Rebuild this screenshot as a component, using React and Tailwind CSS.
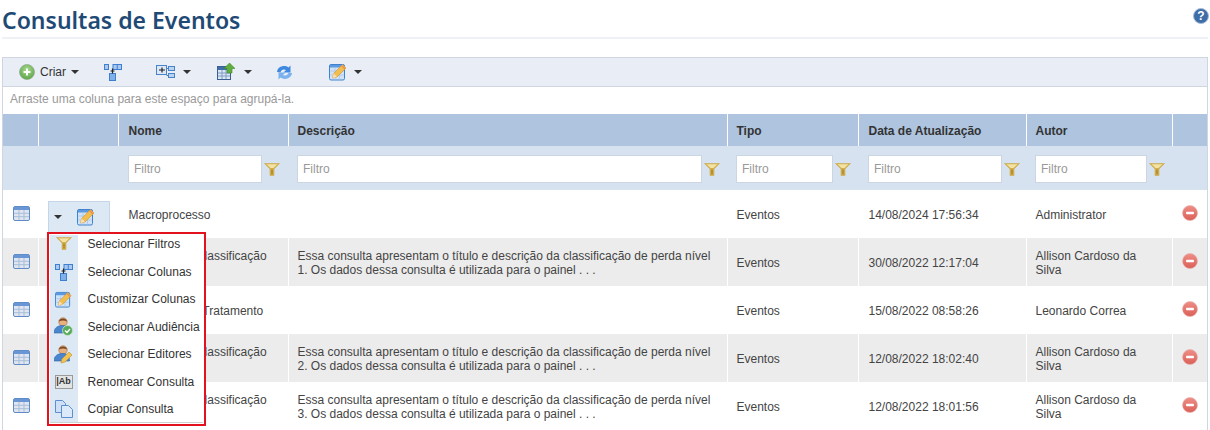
const rows = [
  { name: 'Macroprocesso', desc: [], type: 'Eventos', date: '14/08/2024 17:56:34', author: ['Administrator'], shade: false },
  {
    name: ['Consulta de Classificação', 'de Perda'],
    desc: ['Essa consulta apresentam o título e descrição da classificação de perda nível', '1. Os dados dessa consulta é utilizada para o painel . . .'],
    type: 'Eventos',
    date: '30/08/2022 12:17:04',
    author: ['Allison Cardoso da', 'Silva'],
    shade: true
  },
  { name: 'Eventos para Tratamento', desc: [], type: 'Eventos', date: '15/08/2022 08:58:26', author: ['Leonardo Correa'], shade: false },
  {
    name: ['Consulta de Classificação', 'de Perda'],
    desc: ['Essa consulta apresentam o título e descrição da classificação de perda nível', '2. Os dados dessa consulta é utilizada para o painel . . .'],
    type: 'Eventos',
    date: '12/08/2022 18:02:40',
    author: ['Allison Cardoso da', 'Silva'],
    shade: true
  },
  {
    name: ['Consulta de Classificação', 'de Perda'],
    desc: ['Essa consulta apresentam o título e descrição da classificação de perda nível', '3. Os dados dessa consulta é utilizada para o painel . . .'],
    type: 'Eventos',
    date: '12/08/2022 18:01:56',
    author: ['Allison Cardoso da', 'Silva'],
    shade: false
  }
];

function Caret({ className = '' }) {
  return <span className={`inline-block h-0 w-0 border-x-[4px] border-t-[4px] border-x-transparent border-t-[#333] ${className}`} />;
}

function FunnelIcon({ className = '' }) {
  return (
    <svg width="16" height="13" viewBox="0 0 16 13" className={className}>
      <path d="M.5.5h15L10 6v6.500H6V6z" fill="#d4b04a" stroke="#c9a94f" strokeWidth=".6" />
      <path d="M2.500 1.200h11L9.500 5h-3z" fill="#f2e2a4" />
      <path d="M7 6.500h2v5H7z" fill="#b8912f" />
    </svg>
  );
}

function TableIcon() {
  return (
    <svg width="17" height="15" viewBox="0 0 17 15">
      <rect x=".5" y=".5" width="16" height="14" rx="1.500" fill="#dfe6f0" stroke="#5f8bc9" />
      <rect x="1" y="1" width="15" height="3" fill="#6a96d6" />
      <path d="M1 7.300h15M1 10.700h15M6 4v10M11 4v10" stroke="#a9bdd9" strokeWidth="1" />
    </svg>
  );
}

function EditIcon({ size = 18 }) {
  return (
    <svg width={size} height={size} viewBox="0 0 18 18">
      <rect x=".5" y="1.500" width="15" height="15.500" rx="1.500" fill="#cfe2f7" stroke="#3f83d0" />
      <rect x="1" y="2" width="14" height="2.500" fill="#5c9ae0" />
      <path d="M1.500 8h13M1.500 12h13M6 4.500v12M10.500 4.500v12" stroke="#a9c8ea" strokeWidth=".8" />
      <path d="M3.500 15l1.200-4.500L13.500 1.500 17 5 8 14z" fill="#f2bf4e" stroke="#d8953a" strokeWidth=".7" />
      <path d="M3.500 15l1.200-4.500L8 14z" fill="#f5e2b8" />
      <path d="M12.500 2.500L16 6" stroke="#e88d54" strokeWidth="1.200" />
    </svg>
  );
}

function ColumnsIcon() {
  return (
    <svg width="18" height="18" viewBox="0 0 18 18">
      <rect x=".5" y="1.500" width="4" height="5" fill="#a9c9f0" stroke="#3f7fd0" />
      <rect x="9" y="1.500" width="8.500" height="5" fill="#a9c9f0" stroke="#3f7fd0" />
      <path d="M13.250 1.500v5" stroke="#3f7fd0" />
      <rect x="5.500" y="10.500" width="6" height="7" fill="#7fb0ea" stroke="#3f7fd0" />
      <path d="M8.500 5.500v5M6.500 8h4" stroke="#222" strokeWidth="1.200" />
    </svg>
  );
}

function GroupIcon() {
  return (
    <svg width="19" height="14" viewBox="0 0 19 14">
      <rect x=".5" y=".5" width="10" height="9" fill="#dbe8f8" stroke="#4a82c8" />
      <path d="M3 5h6M6 2.500v5" stroke="#222" strokeWidth="1.200" />
      <rect x="12.500" y="1.500" width="6" height="4" fill="#b9d3f2" stroke="#4a82c8" />
      <rect x="12.500" y="8.500" width="6" height="4" fill="#b9d3f2" stroke="#4a82c8" />
      <path d="M10.500 3.500h2M10.500 10.500h2" stroke="#4a82c8" />
    </svg>
  );
}

function ExportIcon() {
  return (
    <svg width="18" height="18" viewBox="0 0 18 18">
      <rect x=".5" y="3.500" width="13" height="13" fill="#dbe6f4" stroke="#3b5f91" />
      <rect x="1" y="4" width="12" height="3" fill="#3f6ea8" />
      <path d="M1 10h12M1 13h12M5 7v9M9 7v9" stroke="#7f9cc4" />
      <path d="M12.500 0L18 5.500h-3V10h-5V5.500H7z" fill="#5fae3f" stroke="#3e8a27" strokeWidth=".6" />
    </svg>
  );
}

function RefreshIcon() {
  return (
    <svg width="17" height="17" viewBox="0 0 17 17">
      <path d="M1 8C1.500 2.500 8.500 .5 12.500 3.500L14.500 1.500V8.500H7.500L10 6C7.500 4.500 5 6 4.500 8.500z" fill="#3f8ae0" />
      <path d="M16 9C15.500 14.500 8.500 16.500 4.500 13.500L2.500 15.500V8.500H9.500L7 11C9.500 12.500 12 11 12.500 8.500z" fill="#79b2ee" />
    </svg>
  );
}

function PlusIcon() {
  return (
    <svg width="16" height="16" viewBox="0 0 16 16">
      <defs>
        <radialGradient id="plusGreen" cx="50%" cy="35%" r="65%">
          <stop offset="0%" stopColor="#a9d98f" />
          <stop offset="100%" stopColor="#5ea64a" />
        </radialGradient>
      </defs>
      <circle cx="8" cy="8" r="7.500" fill="url(#plusGreen)" stroke="#8fa98a" strokeWidth=".7" />
      <path d="M8 4.500v7M4.500 8h7" stroke="#fff" strokeWidth="2" />
    </svg>
  );
}

function RemoveIcon() {
  return (
    <svg width="16" height="16" viewBox="0 0 16 16">
      <defs>
        <linearGradient id="removeRed" x1="0" y1="0" x2="0" y2="1">
          <stop offset="0%" stopColor="#ee8f88" />
          <stop offset="100%" stopColor="#db5f58" />
        </linearGradient>
      </defs>
      <circle cx="8" cy="8" r="7.500" fill="url(#removeRed)" stroke="#e3b3b0" strokeWidth=".6" />
      <rect x="4" y="6.800" width="8" height="2.400" rx="1" fill="#fff" />
    </svg>
  );
}

function HelpIcon() {
  return (
    <svg width="16" height="16" viewBox="0 0 16 16">
      <circle cx="8" cy="8" r="7.500" fill="#3f6da6" stroke="#a7bdd8" />
      <text x="8" y="12" textAnchor="middle" fontSize="12" fontWeight="700" fill="#fff" fontFamily="Liberation Sans, sans-serif">?</text>
    </svg>
  );
}

function PersonIcon({ variant }) {
  return (
    <svg width="19" height="19" viewBox="0 0 19 19">
      <circle cx="9" cy="5" r="4.200" fill="#e8b07f" stroke="#a5683a" strokeWidth=".6" />
      <path d="M4.800 4.500C5.500 .5 12.500 .5 13.200 4.500 10.500 3 7.500 3 4.800 4.500z" fill="#7a4a22" />
      <path d="M0 16c0-5 3.500-7.500 8.500-7.500s7 2.500 7 7.500z" fill="#4a86cf" stroke="#2f62a3" strokeWidth=".6" />
      {variant === 'check' ? (
        <>
          <circle cx="13.500" cy="13.500" r="5" fill="#58ab5a" stroke="#cde5cd" strokeWidth=".8" />
          <path d="M11 13.500l2 2 3-3.500" fill="none" stroke="#fff" strokeWidth="1.400" />
        </>
      ) : (
        <path d="M7 18l1-4 7-7 3 3-7 7z" fill="#f1c453" stroke="#c9933a" strokeWidth=".7" />
      )}
    </svg>
  );
}

function RenameIcon() {
  return (
    <div className="flex h-[14px] w-[18px] items-center justify-center border border-[#9a9a9a] bg-[#e4e4e4] font-['Liberation_Sans',sans-serif] text-[9px] font-bold leading-none text-[#333]">
      |Ab
    </div>
  );
}

function CopyIcon() {
  return (
    <svg width="18" height="18" viewBox="0 0 18 18">
      <path d="M.5.5h7l3 3v9H.5z" fill="#cfe0f6" stroke="#5c8fd0" />
      <path d="M6.500 5.500h7l4 4v8h-11z" fill="#dce9f9" stroke="#5c8fd0" />
    </svg>
  );
}

// first item is shorter: its content sits high, the rest keep a 27.5px rhythm
const menuItems = [
  { label: 'Selecionar Filtros', icon: <FunnelIcon />, height: 'h-[23px] pb-[6px]' },
  { label: 'Selecionar Colunas', icon: <ColumnsIcon />, height: 'h-[27px]' },
  { label: 'Customizar Colunas', icon: <EditIcon size={17} />, height: 'h-[28px]' },
  { label: 'Selecionar Audiência', icon: <PersonIcon variant="check" />, height: 'h-[27px]' },
  { label: 'Selecionar Editores', icon: <PersonIcon variant="edit" />, height: 'h-[28px]' },
  { label: 'Renomear Consulta', icon: <RenameIcon />, height: 'h-[27px]' },
  { label: 'Copiar Consulta', icon: <CopyIcon />, height: 'h-[27px]' }
];

function RowMenu() {
  return (
    <div className="absolute left-[8px] top-[11px] z-10">
      <div className="ml-px flex h-[31px] w-[62px] items-center gap-[15px] border border-b-0 border-[#c5d6e8] bg-[#dce8f3] pl-[5px]">
        <Caret />
        <EditIcon />
      </div>
      <div className="w-[159px] border-2 border-[#e3121f] bg-white p-px">
        <div className="flex flex-col border-b border-[#d0d0d0] bg-[linear-gradient(to_right,#dce8f3_28px,#fff_28px)]">
          {menuItems.map((item) => (
            <div key={item.label} className={`flex items-center ${item.height}`}>
              <div className="flex w-[28px] shrink-0 items-center justify-center">{item.icon}</div>
              <span className="ml-[10px] whitespace-nowrap text-[#333]">{item.label}</span>
            </div>
          ))}
        </div>
      </div>
    </div>
  );
}

function FilterCell({ width, inset = 'pl-[9px]' }) {
  return (
    <th className={`${inset} pt-[2px] align-middle font-normal`}>
      <div className="flex items-center">
        <div className={`flex h-[28px] items-center border border-[#ccd6e2] bg-white pl-[5px] text-left text-[#999] ${width}`}>Filtro</div>
        <FunnelIcon className="ml-[2px]" />
      </div>
    </th>
  );
}

function Lines({ value }) {
  const lines = Array.isArray(value) ? value : [value];
  return lines.map((line) => (
    <div key={line} className="whitespace-nowrap">
      {line}
    </div>
  ));
}

export default function App() {
  return (
    <div className="h-[430px] w-[1210px] overflow-hidden bg-white font-['Liberation_Sans',Arial,sans-serif] text-[12px] leading-[14px] text-[#444]">
      <div className="mx-[2px] flex h-[39px] items-start justify-between border-b-2 border-[#eef2f7]">
        <h1 className="mt-[4px] font-['Noto_Sans',sans-serif] text-[23px] font-semibold leading-[32px] text-[#1f4a75]">Consultas de Eventos</h1>
        <div className="-mr-px mt-[8px]">
          <HelpIcon />
        </div>
      </div>

      <div className="mx-[2px] mt-[18px] border-x border-t border-[#d0d6e0]">
        <div className="flex h-[29px] items-center border-b border-[#d0d6e0] bg-[#e9eef6] pl-[16px]">
          <PlusIcon />
          <span className="ml-[5px] text-[#333]">Criar</span>
          <Caret className="ml-[5px]" />
          <div className="ml-[25px]">
            <ColumnsIcon />
          </div>
          <div className="ml-[34px]">
            <GroupIcon />
          </div>
          <Caret className="ml-[8px]" />
          <div className="ml-[26px]">
            <ExportIcon />
          </div>
          <Caret className="ml-[9px]" />
          <div className="ml-[24px]">
            <RefreshIcon />
          </div>
          <div className="ml-[36px]">
            <EditIcon />
          </div>
          <Caret className="ml-[7px]" />
        </div>
        <div className="flex h-[27px] items-center pb-[3px] pl-[7px] text-[#999]">Arraste uma coluna para este espaço para agrupá-la.</div>

        <table className="w-full table-fixed border-collapse">
          <colgroup>
            <col className="w-[35px]" />
            <col className="w-[80px]" />
            <col className="w-[170px]" />
            <col className="w-[439px]" />
            <col className="w-[131px]" />
            <col className="w-[168px]" />
            <col className="w-[146px]" />
            <col />
          </colgroup>
          <thead>
            <tr className="h-[32px] bg-[#aec4df] text-left font-bold text-[#333]">
              <th className="border-r border-white" />
              <th className="border-r border-white" />
              <th className="border-r border-white pl-[10px] pt-[2px]">Nome</th>
              <th className="border-r border-white pl-[9px] pt-[2px]">Descrição</th>
              <th className="border-r border-white pl-[9px] pt-[2px]">Tipo</th>
              <th className="border-r border-white pl-[10px] pt-[2px]">Data de Atualização</th>
              <th className="border-r border-white pl-[9px] pt-[2px]">Autor</th>
              <th />
            </tr>
            <tr className="h-[44px] bg-[#d6e2ef]">
              <th />
              <th />
              <FilterCell width="w-[134px]" inset="pl-[10px]" />
              <FilterCell width="w-[405px]" />
              <FilterCell width="w-[97px]" />
              <FilterCell width="w-[134px]" inset="pl-[10px]" />
              <FilterCell width="w-[112px]" />
              <th />
            </tr>
          </thead>
          <tbody>
            {rows.map((row, index) => (
              <tr key={row.date} className={`h-[48px] ${row.shade ? 'bg-[#ececec]' : 'bg-white'}`}>
                <td className="border-r border-white pb-[2px] pl-[10px]">
                  <TableIcon />
                </td>
                <td className="relative border-r border-white">{index === 0 ? <RowMenu /> : null}</td>
                <td className="border-r border-white pl-[10px] pt-[2px]">
                  <Lines value={row.name} />
                </td>
                <td className="border-r border-white pl-[9px] pt-[2px]">
                  <Lines value={row.desc} />
                </td>
                <td className="border-r border-white pl-[9px] pt-[2px]">{row.type}</td>
                <td className="border-r border-white pl-[10px] pt-[2px]">{row.date}</td>
                <td className="border-r border-white pl-[9px] pt-[2px]">
                  <Lines value={row.author} />
                </td>
                <td className="pb-[2px] pl-[9px]">
                  <RemoveIcon />
                </td>
              </tr>
            ))}
          </tbody>
        </table>
      </div>
    </div>
  );
}
